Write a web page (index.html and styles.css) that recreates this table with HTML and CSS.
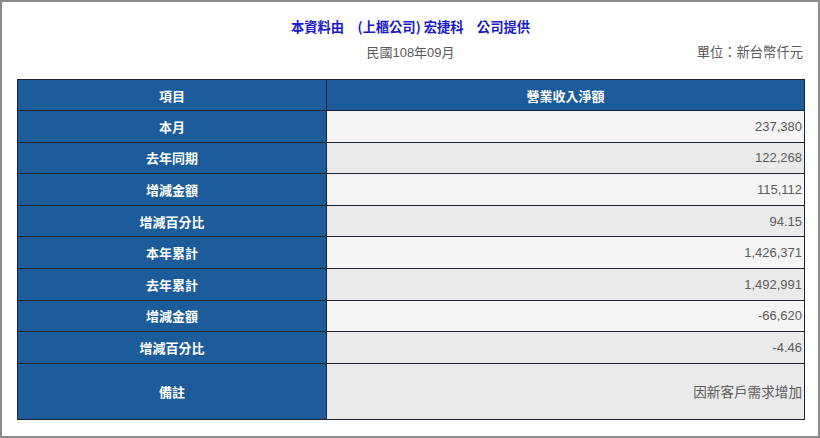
FILE: index.html
```html
<!DOCTYPE html>
<html lang="zh-Hant">
<head>
<meta charset="utf-8">
<link rel="stylesheet" href="styles.css">
</head>
<body>
<div class="frame">
  <div class="title">本資料由　(上櫃公司) 宏捷科　公司提供</div>
  <div class="subline">
    <span class="date">民國108年09月</span>
    <span class="unit">單位：新台幣仟元</span>
  </div>
  <table class="rev">
    <thead>
      <tr class="r-head"><th class="c1">項目</th><th class="c2">營業收入淨額</th></tr>
    </thead>
    <tbody>
      <tr class="r a"><th>本月</th><td>237,380</td></tr>
      <tr class="r b"><th>去年同期</th><td>122,268</td></tr>
      <tr class="r a"><th>增減金額</th><td>115,112</td></tr>
      <tr class="r b"><th>增減百分比</th><td>94.15</td></tr>
      <tr class="r a"><th>本年累計</th><td>1,426,371</td></tr>
      <tr class="r b"><th>去年累計</th><td>1,492,991</td></tr>
      <tr class="r a"><th>增減金額</th><td>-66,620</td></tr>
      <tr class="r b"><th>增減百分比</th><td>-4.46</td></tr>
      <tr class="r-note b"><th>備註</th><td class="note">因新客戶需求增加</td></tr>
    </tbody>
  </table>
</div>
</body>
</html>
```
FILE: styles.css
```css
html, body {
  margin: 0;
  padding: 0;
  background: #ffffff;
}
.frame {
  width: 820px;
  height: 438px;
  box-sizing: border-box;
  border: 2px solid #8c8c8c;
  padding: 17px 14px 0 15px;
  font-family: "Liberation Sans", "Noto Sans CJK TC", sans-serif;
}
.title {
  text-align: center;
  color: #1a1ac8;
  font-family: "Noto Sans CJK TC", sans-serif;
  font-weight: bold;
  font-size: 13.3px;
  line-height: 16px;
  height: 16px;
}
.subline {
  position: relative;
  height: 16px;
  margin-top: 10px;
  font-size: 13px;
  line-height: 16px;
  color: #5a5a5a;
  font-family: "Liberation Sans", "Noto Sans CJK TC", sans-serif;
}
.date {
  display: block;
  text-align: center;
}
.unit {
  position: absolute;
  right: 1px;
  top: 0;
  font-size: 13.3px;
}
.rev {
  margin-top: 18px;
  width: 788px;
  border-collapse: collapse;
  table-layout: fixed;
}
.rev th, .rev td {
  border: 1px solid #1c2430;
  padding: 0;
}
.rev th {
  background: #1c5c9a;
  color: #ffffff;
  font-family: "Noto Sans CJK TC", sans-serif;
  font-weight: bold;
  font-size: 13px;
  text-align: center;
}
.c1 { width: 308px; }
.r-head { height: 31px; }
.r { height: 31.6px; }
.r-note { height: 56px; }
.rev td {
  text-align: right;
  padding-right: 2px;
  font-size: 13px;
  color: #5a5a5a;
}
.a td { background: #f4f4f4; }
.b td { background: #eaeaea; }
.rev td.note {
  font-family: "Noto Sans CJK TC", sans-serif;
  font-size: 13.6px;
}
```
